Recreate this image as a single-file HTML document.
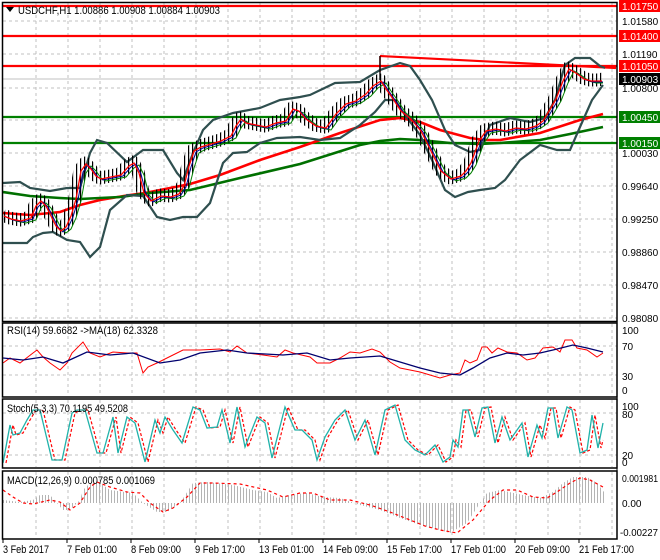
<!DOCTYPE html>
<html><head><meta charset="utf-8"><style>
html,body{margin:0;padding:0;background:#fff;}
svg{display:block;font-family:"Liberation Sans",sans-serif;}
</style></head><body>
<svg width="660" height="560" viewBox="0 0 660 560" xmlns="http://www.w3.org/2000/svg">
<defs>
<pattern id="cand" width="4" height="600" patternUnits="userSpaceOnUse"><rect x="0" y="0" width="1.2" height="600" fill="#000"/></pattern>
<pattern id="hist" width="3" height="600" patternUnits="userSpaceOnUse"><rect x="0" y="0" width="1" height="600" fill="#b4b4b4"/></pattern>
<clipPath id="cm"><rect x="3" y="3" width="614" height="318"/></clipPath>
</defs>
<rect width="660" height="560" fill="#fff"/>
<g stroke="#c0c0c0" stroke-dasharray="3,3" stroke-width="1">
<path d="M36 3V321M68 3V321M100 3V321M132 3V321M164 3V321M196 3V321M228 3V321M260 3V321M292 3V321M324 3V321M356 3V321M388 3V321M420 3V321M452 3V321M484 3V321M516 3V321M548 3V321M580 3V321M612 3V321"/>
<path d="M36 324V396M68 324V396M100 324V396M132 324V396M164 324V396M196 324V396M228 324V396M260 324V396M292 324V396M324 324V396M356 324V396M388 324V396M420 324V396M452 324V396M484 324V396M516 324V396M548 324V396M580 324V396M612 324V396"/>
<path d="M36 400V467M68 400V467M100 400V467M132 400V467M164 400V467M196 400V467M228 400V467M260 400V467M292 400V467M324 400V467M356 400V467M388 400V467M420 400V467M452 400V467M484 400V467M516 400V467M548 400V467M580 400V467M612 400V467"/>
<path d="M36 472V538M68 472V538M100 472V538M132 472V538M164 472V538M196 472V538M228 472V538M260 472V538M292 472V538M324 472V538M356 472V538M388 472V538M420 472V538M452 472V538M484 472V538M516 472V538M548 472V538M580 472V538M612 472V538"/>
<path d="M3 21H617M3 54H617M3 88H617M3 120H617M3 153H617M3 186H617M3 219H617M3 252H617M3 285H617M3 318H617"/>
<path d="M3 346H617M3 375H617M3 413H617M3 455H617"/>
</g>
<line x1="3" y1="79" x2="617" y2="79" stroke="#c0c0c0"/>
<g clip-path="url(#cm)">
<g stroke="#ff0000" stroke-width="2.2"><path d="M3 6H617M3 36H617M3 66H617"/></g>
<path d="M380 56L616 68" stroke="#ff0000" stroke-width="2.2" fill="none"/>
<path d="M380 56V72" stroke="#ff0000" stroke-width="1.5"/>
<g stroke="#008000" stroke-width="2.2"><path d="M3 117H617M3 143H617"/></g>
<polyline fill="none" stroke="#ff0000" stroke-width="2.6" points="3,213 30,215 60,212 80,205 100,200 130,195 145,193 170,188 190,184 220,175 260,160 300,147 340,133 380,120 400,118 420,122 440,130 470,138 485,140 500,140 540,133 580,120 603,114"/>
<polyline fill="none" stroke="#007000" stroke-width="2.6" points="3,192 30,196 60,198 80,199 120,197 150,193 190,190 240,178 300,164 360,145 380,141 400,139 420,140 450,143 480,144 500,143 540,140 570,134 603,127"/>
<polyline fill="none" stroke="#2f4f4f" stroke-width="2.2" points="3,183 20,182 30,188 50,191 67,188 80,188 90,153 97,140 107,143 127,162 143,150 163,150 177,173 183,180 193,153 203,130 213,120 233,113 260,108 280,100 300,97 310,95 335,83 360,82 380,70 400,63 410,66 420,80 432,100 445,130 455,145 470,152 480,150 490,125 510,118 530,122 545,118 555,100 565,65 575,58 590,58 600,66 605,68"/>
<polyline fill="none" stroke="#2f4f4f" stroke-width="2.2" points="3,243 27,243 33,237 43,233 53,232 67,240 80,242 90,257 100,247 110,210 127,195 143,196 157,217 170,220 183,217 197,217 210,203 223,163 233,153 247,152 260,143 277,138 300,137 320,140 340,138 360,125 375,112 385,100 395,100 405,115 420,135 432,160 445,190 455,197 468,192 480,190 495,188 505,180 520,160 540,145 557,150 570,150 580,127 592,100 603,85"/>
<polyline fill="none" stroke="url(#cand)" stroke-width="13" stroke-linejoin="round" points="3,215 10,218 20,220 30,217 35,205 40,200 45,205 50,215 55,225 60,230 65,226 70,215 75,198 80,170 85,163 90,168 95,175 100,178 110,176 120,174 128,165 133,162 138,172 143,192 150,200 160,195 170,196 178,193 183,185 188,165 193,150 200,146 210,143 220,140 230,135 235,125 240,118 245,122 255,124 265,126 275,122 285,120 292,108 298,110 305,118 315,125 325,127 335,113 345,103 355,100 365,93 372,85 380,80 385,88 390,95 400,110 410,118 420,130 430,150 440,170 450,178 460,175 465,170 470,162 478,140 485,130 495,128 505,130 515,127 525,128 535,125 542,120 548,110 555,98 562,80 568,68 575,72 583,78 590,80 597,80 603,79"/>
<path d="M380 56V80" stroke="#000" stroke-width="1.3"/>
<g fill="none" stroke-width="1">
<polyline transform="translate(6,3)" stroke="#008000" points="3,215 10,218 20,220 30,217 35,205 40,200 45,205 50,215 55,225 60,230 65,226 70,215 75,198 80,170 85,163 90,168 95,175 100,178 110,176 120,174 128,165 133,162 138,172 143,192 150,200 160,195 170,196 178,193 183,185 188,165 193,150 200,146 210,143 220,140 230,135 235,125 240,118 245,122 255,124 265,126 275,122 285,120 292,108 298,110 305,118 315,125 325,127 335,113 345,103 355,100 365,93 372,85 380,80 385,88 390,95 400,110 410,118 420,130 430,150 440,170 450,178 460,175 465,170 470,162 478,140 485,130 495,128 505,130 515,127 525,128 535,125 542,120 548,110 555,98 562,80 568,68 575,72 583,78 590,80 597,80"/>
<polyline transform="translate(3,2)" stroke="#00008b" points="3,215 10,218 20,220 30,217 35,205 40,200 45,205 50,215 55,225 60,230 65,226 70,215 75,198 80,170 85,163 90,168 95,175 100,178 110,176 120,174 128,165 133,162 138,172 143,192 150,200 160,195 170,196 178,193 183,185 188,165 193,150 200,146 210,143 220,140 230,135 235,125 240,118 245,122 255,124 265,126 275,122 285,120 292,108 298,110 305,118 315,125 325,127 335,113 345,103 355,100 365,93 372,85 380,80 385,88 390,95 400,110 410,118 420,130 430,150 440,170 450,178 460,175 465,170 470,162 478,140 485,130 495,128 505,130 515,127 525,128 535,125 542,120 548,110 555,98 562,80 568,68 575,72 583,78 590,80 600,80"/>
<polyline transform="translate(1,1)" stroke="#ff0000" stroke-width="1.3" points="3,215 10,218 20,220 30,217 35,205 40,200 45,205 50,215 55,225 60,230 65,226 70,215 75,198 80,170 85,163 90,168 95,175 100,178 110,176 120,174 128,165 133,162 138,172 143,192 150,200 160,195 170,196 178,193 183,185 188,165 193,150 200,146 210,143 220,140 230,135 235,125 240,118 245,122 255,124 265,126 275,122 285,120 292,108 298,110 305,118 315,125 325,127 335,113 345,103 355,100 365,93 372,85 380,80 385,88 390,95 400,110 410,118 420,130 430,150 440,170 450,178 460,175 465,170 470,162 478,140 485,130 495,128 505,130 515,127 525,128 535,125 542,120 548,110 555,98 562,80 568,68 575,72 583,78 590,80 601,80"/>
</g>
</g>
<polyline fill="none" stroke="#ff0000" stroke-width="1" points="3,363 10,358 20,363 33,353 37,350 43,357 50,363 60,370 67,363 72,353 83,342 90,353 100,357 113,352 127,353 137,353 143,373 148,367 157,363 173,355 183,350 200,350 220,349 230,352 237,346 247,353 263,355 277,357 285,350 293,353 310,357 317,363 330,363 340,358 350,352 360,353 372,349 380,352 390,362 400,368 410,370 420,372 430,375 440,378 450,375 460,373 465,360 470,363 477,360 482,347 487,347 492,353 498,348 507,352 517,353 527,360 535,358 543,348 553,347 560,352 565,340 572,340 577,348 587,350 597,357 603,353"/>
<polyline fill="none" stroke="#00006e" stroke-width="1.3" points="3,358 23,360 43,357 63,363 87,352 110,355 133,353 160,363 180,360 200,353 227,350 247,353 283,355 307,353 330,360 350,358 380,356 400,362 420,368 440,373 460,375 473,368 490,358 507,353 523,355 540,353 553,350 573,345 587,348 603,352"/>
<polyline transform="translate(3,0)" fill="none" stroke="#ff0000" stroke-width="1.2" stroke-dasharray="3,2" points="3,463 10,425 13,435 20,433 27,420 33,410 40,410 52,460 62,460 72,413 77,410 85,410 97,453 103,453 113,417 118,453 127,417 135,423 145,462 155,420 160,433 165,417 173,430 182,443 193,407 200,410 207,428 217,427 222,410 230,443 237,407 245,447 257,417 265,423 272,458 285,407 295,430 302,430 312,440 317,460 325,437 335,420 345,410 355,440 365,420 375,455 385,410 395,405 405,440 415,450 425,455 435,445 443,462 450,457 453,440 458,447 463,410 468,410 475,437 482,408 488,407 495,443 502,417 510,440 522,423 528,457 537,425 542,438 548,408 553,408 558,438 567,407 572,410 580,453 587,450 592,415 598,448 600,440"/>
<polyline fill="none" stroke="#20b2aa" stroke-width="1.3" points="3,463 10,425 13,435 20,433 27,420 33,410 40,410 52,460 62,460 72,413 77,410 85,410 97,453 103,453 113,417 118,453 127,417 135,423 145,462 155,420 160,433 165,417 173,430 182,443 193,407 200,410 207,428 217,427 222,410 230,443 237,407 245,447 257,417 265,423 272,458 285,407 295,430 302,430 312,440 317,460 325,437 335,420 345,410 355,440 365,420 375,455 385,410 395,405 405,440 415,450 425,455 435,445 443,462 450,457 453,440 458,447 463,410 468,410 475,437 482,408 488,407 495,443 502,417 510,440 522,423 528,457 537,425 542,438 548,408 553,408 558,438 567,407 572,410 580,453 587,450 592,415 598,448 603,423"/>
<polygon fill="url(#hist)" points="3,503 3,500 20,502 33,500 40,495 50,495 57,503 63,510 70,510 80,500 83,490 90,483 100,483 110,490 133,493 143,503 157,512 167,512 180,503 193,483 207,482 233,485 253,490 267,492 277,498 290,495 307,493 323,497 340,498 360,505 380,510 400,518 420,525 440,530 450,533 467,523 480,503 487,493 500,490 523,495 540,498 553,492 563,483 573,477 587,477 597,483 604,492 604,503"/>
<polyline fill="none" stroke="#ff0000" stroke-width="1.2" stroke-dasharray="3,3" points="3,490 13,497 23,503 33,504 50,500 60,502 70,510 80,503 90,487 97,482 110,487 127,492 140,493 150,503 163,512 173,508 187,497 200,483 213,483 240,484 267,490 283,497 300,493 313,493 330,500 350,500 370,505 390,512 410,520 425,526 440,530 457,533 473,520 490,500 503,490 517,490 533,497 547,498 557,492 570,483 580,478 590,480 603,487"/>
<g fill="none" stroke="#000" stroke-width="1.5">
<rect x="2.5" y="2.5" width="614.5" height="319"/>
<rect x="2.5" y="323" width="614.5" height="74"/>
<rect x="2.5" y="399" width="614.5" height="69"/>
<rect x="2.5" y="471" width="614.5" height="68"/>
</g>
<g stroke="#000"><path d="M3 539v4M67 539v4M131 539v4M195 539v4M259 539v4M323 539v4M387 539v4M451 539v4M515 539v4M579 539v4M617 2v537"/></g>
<g font-size="11" fill="#000">
<text x="18" y="14" textLength="202" lengthAdjust="spacingAndGlyphs">USDCHF,H1  1.00886 1.00908 1.00884 1.00903</text>
<text x="7" y="334" textLength="151" lengthAdjust="spacingAndGlyphs">RSI(14) 59.6682  -&gt;MA(18) 62.3328</text>
<text x="7" y="412" textLength="121" lengthAdjust="spacingAndGlyphs">Stoch(5,3,3) 70.1195 49.5208</text>
<text x="7" y="484" textLength="148" lengthAdjust="spacingAndGlyphs">MACD(12,26,9) 0.000785 0.001069</text>
</g>
<path d="M6 7h8l-4 5z" fill="#000"/>
<g font-size="11" fill="#000" lengthAdjust="spacingAndGlyphs">
<text x="3" y="553" textLength="46" lengthAdjust="spacingAndGlyphs">3 Feb 2017</text>
<text x="67" y="553" textLength="50" lengthAdjust="spacingAndGlyphs">7 Feb 01:00</text>
<text x="131" y="553" textLength="50" lengthAdjust="spacingAndGlyphs">8 Feb 09:00</text>
<text x="195" y="553" textLength="50" lengthAdjust="spacingAndGlyphs">9 Feb 17:00</text>
<text x="259" y="553" textLength="55" lengthAdjust="spacingAndGlyphs">13 Feb 01:00</text>
<text x="323" y="553" textLength="55" lengthAdjust="spacingAndGlyphs">14 Feb 09:00</text>
<text x="387" y="553" textLength="55" lengthAdjust="spacingAndGlyphs">15 Feb 17:00</text>
<text x="451" y="553" textLength="55" lengthAdjust="spacingAndGlyphs">17 Feb 01:00</text>
<text x="515" y="553" textLength="55" lengthAdjust="spacingAndGlyphs">20 Feb 09:00</text>
<text x="579" y="553" textLength="55" lengthAdjust="spacingAndGlyphs">21 Feb 17:00</text>
</g>
<g font-size="10" fill="#000">
<text x="622" y="25">1.01580</text>
<text x="622" y="58">1.01190</text>
<text x="622" y="92">1.00800</text>
<text x="622" y="157">1.00030</text>
<text x="622" y="190">0.99640</text>
<text x="622" y="223">0.99250</text>
<text x="622" y="256">0.98860</text>
<text x="622" y="289">0.98470</text>
<text x="622" y="322">0.98080</text>
<text x="622" y="334">100</text>
<text x="622" y="350">70</text>
<text x="622" y="380">30</text>
<text x="622" y="394">0</text>
<text x="622" y="410">100</text>
<text x="622" y="418">80</text>
<text x="622" y="459">20</text>
<text x="622" y="466">0</text>
<text x="622" y="482" textLength="36" lengthAdjust="spacingAndGlyphs">0.001981</text>
<text x="622" y="507">0.00</text>
<text x="620" y="536" textLength="38" lengthAdjust="spacingAndGlyphs">-0.00227</text>
</g>
<rect x="619" y="0" width="41" height="12" fill="#ff0000"/>
<rect x="619" y="30" width="41" height="12" fill="#ff0000"/>
<rect x="619" y="60" width="41" height="12" fill="#ff0000"/>
<rect x="619" y="73" width="41" height="12" fill="#000"/>
<rect x="619" y="111" width="41" height="12" fill="#008000"/>
<rect x="619" y="137" width="41" height="12" fill="#008000"/>
<g font-size="10" fill="#fff">
<text x="622" y="10">1.01750</text>
<text x="622" y="40">1.01400</text>
<text x="622" y="70">1.01050</text>
<text x="622" y="83">1.00903</text>
<text x="622" y="121">1.00450</text>
<text x="622" y="147">1.00150</text>
</g>
</svg>
</body></html>
